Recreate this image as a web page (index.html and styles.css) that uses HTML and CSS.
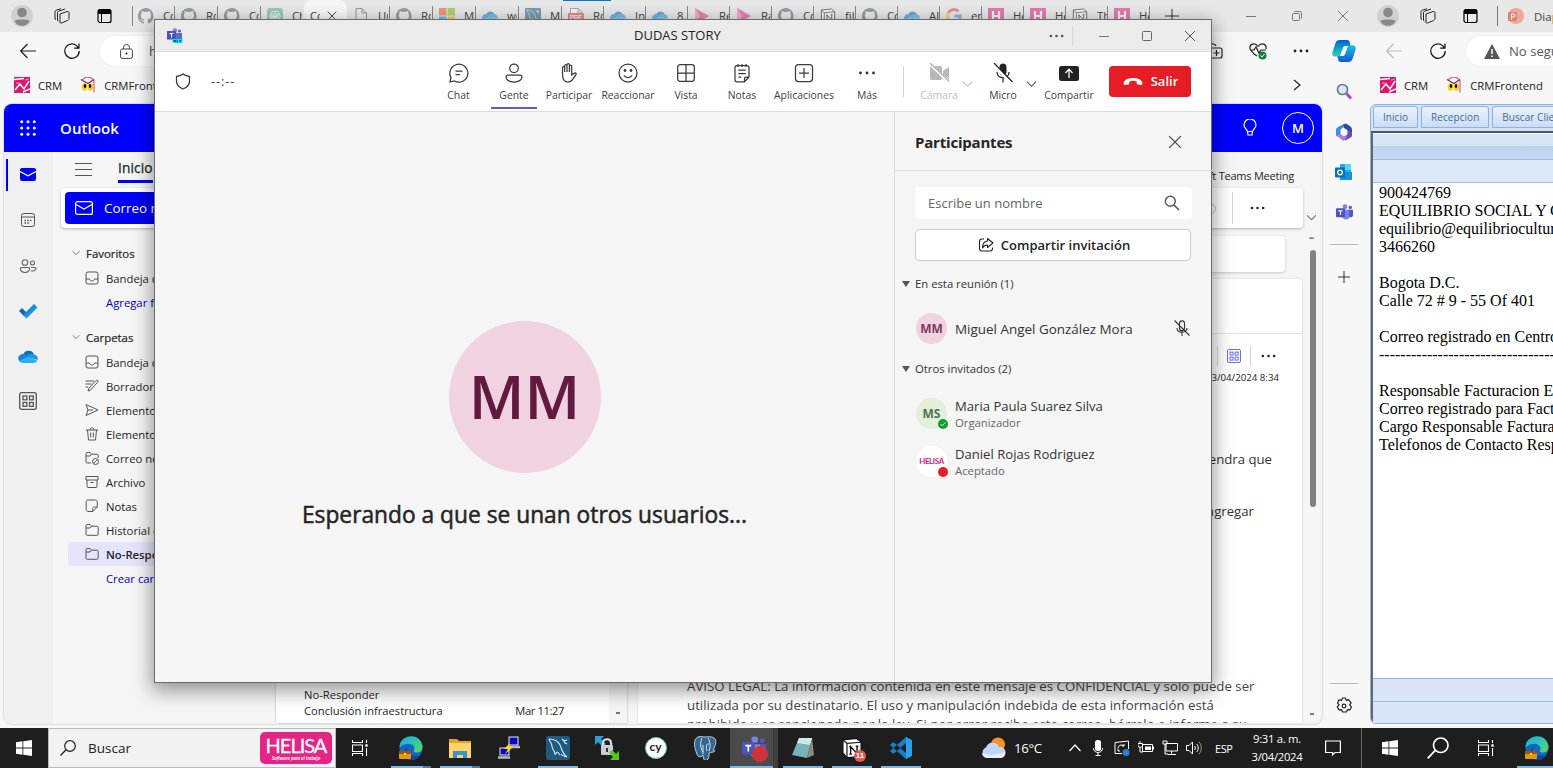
FILE: index.html
```html
<!DOCTYPE html>
<html lang="es">
<head>
<meta charset="utf-8">
<title>DUDAS STORY</title>
<link rel="stylesheet" href="styles.css">
</head>
<body>
<svg class="defs" aria-hidden="true">
<defs>
<linearGradient id="gBlue" x1="0" y1="0" x2="1" y2="1"><stop offset="0" stop-color="#1263c4"/><stop offset="1" stop-color="#25b7f5"/></linearGradient>
<linearGradient id="gEdge" x1="0" y1="0" x2="1" y2="1"><stop offset="0" stop-color="#1ca9e8"/><stop offset=".55" stop-color="#36c8a6"/><stop offset="1" stop-color="#62d84e"/></linearGradient>
<linearGradient id="gCop" x1="0" y1="0" x2="0" y2="1"><stop offset="0" stop-color="#0a5fc4"/><stop offset=".6" stop-color="#13a9cf"/><stop offset="1" stop-color="#35cfb0"/></linearGradient>
<linearGradient id="gCop2" x1="0" y1="0" x2="0" y2="1"><stop offset="0" stop-color="#17c3dd"/><stop offset="1" stop-color="#1556d8"/></linearGradient>
<symbol id="github" viewBox="0 0 16 16"><path fill="#555b62" d="M8 0C3.58 0 0 3.58 0 8c0 3.54 2.29 6.53 5.47 7.59.4.07.55-.17.55-.38v-1.49C4 14.1 3.48 13 3.3 12.500 3.1 12 2.800 11.600 2.400 11.400c-.3-.15-.7-.5 0-.5.7 0 1.100.6 1.250.85.72 1.200 1.870.87 2.330.66.07-.52.280-.870.51-1.070-1.780-.2-3.640-.89-3.640-3.950 0-.87.310-1.590.820-2.150-.080-.2-.360-1.020.080-2.120 0 0 .670-.210 2.200.820a7.600 7.600 0 0 1 4 0c1.530-1.040 2.200-.820 2.200-.820.440 1.100.160 1.920.080 2.120.510.560.820 1.270.820 2.150 0 3.070-1.870 3.750-3.650 3.950.290.250.540.730.540 1.480v2.200c0 .210.150.460.550.380A8 8 0 0 0 8 0z"/></symbol>
<symbol id="cloud" viewBox="0 0 20 13"><path fill="#1068bd" d="M5.200 4.500A5.800 5.800 0 0 1 15.800 4L10 9z"/><path fill="#0f84dc" d="M5.500 4a4.600 4.600 0 0 0-4.500 7l10-2-2.500-4.200A5 5 0 0 0 5.500 4z"/><path fill="#1798e8" d="M15.200 4.200A4.500 4.500 0 0 1 19.500 10L8.500 6.500a6 6 0 0 1 6.700-2.300z"/><path fill="#28b0f2" d="m1 11 8.500-4.300L19.300 10.500A4 4 0 0 1 16 13H5c-1.700 0-3.200-.700-4-2z"/></symbol>
<symbol id="openai" viewBox="0 0 16 16"><rect width="16" height="16" rx="3" fill="#57ab95"/><g fill="none" stroke="#fff"><circle cx="8" cy="8" r="2.300"/><path d="M8 3.500a3 3 0 0 1 4 2.500L8 8.500M12 6a3 3 0 0 1 0 4.500L8 8M12 10.500a3 3 0 0 1-5 1.500V7.500M8 3.500a3 3 0 0 0-4 2.500v4.500l4-2.500M4 10.500a3 3 0 0 1-.500-4"/></g></symbol>
<symbol id="page" viewBox="0 0 16 16"><path d="M3 .500h6l4.500 4.500v10.500H3zM9 .500V5h4.500" fill="none" stroke="#555"/></symbol>
<symbol id="ms" viewBox="0 0 16 16"><path fill="#f35325" d="M0 0h7.500v7.500H0z"/><path fill="#81bc06" d="M8.500 0H16v7.500H8.500z"/><path fill="#05a6f0" d="M0 8.500h7.500V16H0z"/><path fill="#ffba08" d="M8.500 8.500H16V16H8.500z"/></symbol>
<symbol id="mysql" viewBox="0 0 24 24"><rect width="24" height="24" rx="2" fill="#1f5a80"/><path d="M3 3c5 0 9 2 11 6 1.500 3 2 8 7 12-3-1-5-1-6-3M3 3c0 2 2 3 2.500 5S6 13 8 15c1 1 0 2 1 3s1-2 2-2 2 2 3 3" fill="none" stroke="#dbe8ef" stroke-width="1.100"/><path d="m16 3 2 2 1 2 2 1M18 5l3-1" fill="none" stroke="#dbe8ef" stroke-width="1.300"/></symbol>
<symbol id="pdf" viewBox="0 0 16 16"><path d="M2.500.500h8l3.500 4V15H2.500zM10 .500V5h4" fill="#fff" stroke="#777"/><rect y="5" width="16" height="8" rx="1" fill="#e33"/><text x="8" y="11.300" font-family="Liberation Sans, sans-serif" font-weight="700" font-size="6" text-anchor="middle" fill="#fff">PDF</text></symbol>
<symbol id="play" viewBox="0 0 16 16"><path fill="#e0307f" d="M1 0 15 8 1 16z"/><path fill="#f17fb0" d="m1 0 5 8-5 8z"/></symbol>
<symbol id="notion" viewBox="0 0 24 24"><path fill="#fff" stroke="#111" stroke-width="1.500" d="m2 3 15-1.500 5 4v16L6.500 22.500 2 17.500z"/><path d="m2 3 4.500 4L22 5.700M6.500 7v15" fill="none" stroke="#111" stroke-width="1.300"/><path d="M10.500 18.500v-8l7 7.500v-8M9 10.500h2M16 10h3M9 18.700h3" fill="none" stroke="#111" stroke-width="1.500"/></symbol>
<symbol id="google" viewBox="0 0 16 16"><g fill="none" stroke-width="2.800"><path stroke="#ea4335" d="M2.500 4.800A6.300 6.300 0 0 1 12.500 3.500"/><path stroke="#fbbc05" d="M2.500 4.800a6.300 6.300 0 0 0 0 6.400"/><path stroke="#34a853" d="M2.500 11.200a6.300 6.300 0 0 0 9.800 1.500"/><path stroke="#4285f4" d="M12.300 12.700A6 6 0 0 0 14.300 8H8.500"/></g></symbol>
<symbol id="hpink" viewBox="0 0 16 16"><rect width="16" height="16" fill="#e61f80"/><path d="M5 3v10M11 3v10M5 8h6" stroke="#fff" stroke-width="2.200" fill="none"/></symbol>
<symbol id="stack" viewBox="0 0 17 17"><g fill="none" stroke="#222" stroke-linejoin="round"><path d="m7 6 7-2.500c1-.300 2 .300 2 1.300v5.700c0 1-.500 1.500-1.500 2L8.500 15C7.500 15.300 7 15 7 14z"/><path d="M4.500 12.500V5c0-1 .300-1.500 1.200-1.800L12 1M2 11V4c0-1 .300-1.500 1.200-1.800L8 .800M4.500 12.500l1 .500M2 11l1 .500"/></g></symbol>
<symbol id="vtabs" viewBox="0 0 16 16"><rect x="1" y="1.500" width="13" height="13" rx="2" fill="none" stroke="#000" stroke-width="1.200"/><path d="M1.500 2h12v3.500h-12zM4.500 6v8" stroke="#000" fill="#000"/></symbol>
<symbol id="back" viewBox="0 0 16 16"><path d="M16 8H1M7.500 1 .700 8l6.800 7" fill="none" stroke="currentColor" stroke-width="1.200"/></symbol>
<symbol id="reload" viewBox="0 0 16 16"><path d="M14.500 5A7.200 7.200 0 1 0 15.200 8M15 .500V5.200h-4.800" fill="none" stroke="#111" stroke-width="1.200"/></symbol>
<symbol id="x" viewBox="0 0 12 12"><path d="m1 1 10 10M11 1 1 11" stroke="currentColor" fill="none"/></symbol>
<symbol id="crm" viewBox="0 0 16 16"><rect width="16" height="16" fill="#e4126e"/><path d="m1 13 5-6 4 5 5-8M0 2.500l10-1M9 15l7-3" stroke="#fff" stroke-width="1.500" fill="none"/><path d="M2 6h3M11 3l4-1" stroke="#fff" stroke-width=".600"/></symbol>
<symbol id="owl" viewBox="0 0 16 16"><path d="M2 3.500c3-4.500 9-4.500 12 0v12" fill="none" stroke="#e95595" stroke-width="1.200"/><path d="m1 2.500 7 4 6-4" stroke="#6b3550" stroke-width="1.200" fill="none"/><ellipse cx="4.500" cy="10" rx="2.800" ry="3.800" fill="#f8d012"/><ellipse cx="10.500" cy="10" rx="2.800" ry="3.800" fill="#f8d012"/><ellipse cx="5" cy="9" rx="1.200" ry="2"/><ellipse cx="10" cy="9" rx="1.200" ry="2"/></symbol>
<symbol id="person" viewBox="0 0 22 22"><circle cx="11" cy="11" r="11" fill="#d2d0ce"/><circle cx="11" cy="7.500" r="4.800" fill="#8a8886"/><path fill="#8a8886" d="M3.500 15.500c2-1.500 13-1.500 15 0-1.500 7-13.500 7-15 0z"/></symbol>
<symbol id="dots" viewBox="0 0 16 4"><g fill="currentColor"><circle cx="2" cy="2" r="1.400"/><circle cx="8" cy="2" r="1.400"/><circle cx="14" cy="2" r="1.400"/></g></symbol>
<symbol id="chev" viewBox="0 0 12 8"><path d="m1 1.500 5 5 5-5" fill="none" stroke="currentColor" stroke-width="1.200"/></symbol>
<symbol id="mail" viewBox="0 0 18 14"><rect x=".600" y=".600" width="16.800" height="12.800" rx="2" fill="none" stroke="currentColor" stroke-width="1.200"/><path d="m1 3.500 8 4.500 8-4.500" fill="none" stroke="currentColor" stroke-width="1.200"/></symbol>
<symbol id="apps4" viewBox="0 0 18 18"><g fill="none" stroke="currentColor" stroke-width="1.300"><rect x=".700" y=".700" width="16.600" height="16.600" rx="2"/><rect x="4" y="4" width="3.800" height="3.800"/><rect x="10.500" y="4" width="3.800" height="3.800"/><rect x="4" y="10.500" width="3.800" height="3.800"/><rect x="10.500" y="10.500" width="3.800" height="3.800"/></g></symbol>
<symbol id="inbox" viewBox="0 0 14 14"><path d="M3 1h8a2 2 0 0 1 2 2v8a2 2 0 0 1-2 2H3a2 2 0 0 1-2-2V3a2 2 0 0 1 2-2zM1 8h3.500c.500 2.700 4.500 2.700 5 0H13" fill="none" stroke="currentColor"/></symbol>
<symbol id="draft" viewBox="0 0 14 14"><path d="m3 12 1-3 7-7.500c1.300-1 2.800.500 1.700 1.700L5.500 11zM.500 2H9M.500 5h6M.500 8H3" fill="none" stroke="currentColor"/></symbol>
<symbol id="send" viewBox="0 0 14 14"><path d="m1 1.500 12 5.500-12 5.500 2-5.500zM3 7h5" fill="none" stroke="currentColor"/></symbol>
<symbol id="trash" viewBox="0 0 14 14"><path d="M1 3h12M5 3c0-3 4-3 4 0M2.500 3l1 10h7l1-10M5.700 5.500v5M8.300 5.500v5" fill="none" stroke="currentColor"/></symbol>
<symbol id="folder" viewBox="0 0 14 14"><path d="M1 2.500c0-.700.500-1 1-1h3l1.500 1.700H12c.700 0 1.200.500 1.200 1.100V11c0 .800-.500 1.300-1.300 1.300H2.200C1.500 12.300 1 12 1 11zM1 5h4l1.500-1.800" fill="none" stroke="currentColor"/></symbol>
<symbol id="junk" viewBox="0 0 14 14"><path d="M6 12H2.200C1.500 12 1 11.500 1 11V2.500c0-.700.500-1 1-1h3l1.500 1.700H12c.700 0 1.200.500 1.200 1.100V7M1 5h4l1.500-1.800" fill="none" stroke="currentColor"/><circle cx="10.500" cy="10.500" r="3" fill="none" stroke="currentColor"/><path d="m8.500 12.500 4-4" stroke="currentColor"/></symbol>
<symbol id="archive" viewBox="0 0 14 14"><path d="M1 1.500h12V5H1zM2 5v6.500c0 .600.500 1 1 1h8c.600 0 1-.400 1-1V5M5.500 7.500h3" fill="none" stroke="currentColor"/></symbol>
<symbol id="note" viewBox="0 0 14 14"><path d="M3 1h7.500c1 0 1.800.800 1.800 1.800V8l-4.500 4.500H3c-1 0-1.800-.800-1.800-1.800V2.800C1.200 1.800 2 1 3 1zM12.300 8H9.500C8.500 8 7.800 8.500 7.800 9.500v3" fill="none" stroke="currentColor"/></symbol>
<symbol id="teams" viewBox="0 0 16 16"><circle cx="8.500" cy="2.500" r="2.200" fill="#7b83eb"/><circle cx="13.500" cy="3.200" r="1.600" fill="#5059c9"/><path fill="#7b83eb" d="M6 5.500h7V12a4 4 0 0 1-7 1z"/><path fill="#5059c9" d="M12 5.500h4V10c0 2-1.500 3-3.500 2.500z"/><rect y="4" width="8.500" height="8.500" rx="1" fill="#4b53bc"/><path d="M2.200 6.400h4M4.200 6.400v4" stroke="#fff" stroke-width="1.100"/></symbol>
<symbol id="edge" viewBox="0 0 24 24"><circle cx="12" cy="12" r="11.500" fill="#1166c6"/><path fill="url(#gEdge)" d="M.600 10C2-2 21-4 23.500 10c.500 7-7 8-9 5 3-3-1-8-6-7-4 0-7 2-7.900 4z"/><path fill="#1a3f96" d="M9 11c-3 3 0 9 7 9 3 0 5-1 6-2-3 6-10 8-14 5C4 20 5 13 9 11z"/><rect y="15" width="12" height="8" rx="1" fill="#e5950f"/><path fill="#9a5b00" d="M0 15h12v3H0z"/><path fill="#ffd45c" d="M5 17h2v2H5z"/></symbol>
<symbol id="win" viewBox="0 0 16 16"><path fill="#fff" d="m0 2.300 6.500-1v6.300H0zM7.300 1.200 16 0v7.600H7.300zM0 8.400h6.500v6.300l-6.500-1zM7.300 8.400H16V16l-8.700-1.200z"/></symbol>
<symbol id="taskview" viewBox="0 0 16 16"><path d="M.500 0v2.500h10V0M.500 5h10v6.500H.500zM.500 16v-2.500h10V16M14.500 0v3M14.500 8v8" fill="none" stroke="#fff" stroke-width="1.100"/><path fill="#fff" d="M13.300 4.300h2.400v2.400h-2.400z"/></symbol>
<symbol id="mag" viewBox="0 0 16 16"><circle cx="10" cy="6" r="5.300" fill="none" stroke="currentColor" stroke-width="1.200"/><path d="M6 9.800.500 15.500" stroke="currentColor" stroke-width="1.300"/></symbol>
</defs>
</svg>

<div class="desktop">
  <div class="screens">
    <div class="browser left-browser">
      <div class="tabstrip">
        <svg class="avatar"><use href="#person"/></svg>
        <svg class="stack"><use href="#stack"/></svg>
        <svg class="i16 vt"><use href="#vtabs"/></svg>
        <div class="tabs">
          <div class="tab"><svg><use href="#github"/></svg><span>Co</span></div>
          <div class="tab"><svg><use href="#github"/></svg><span>Ro</span></div>
          <div class="tab"><svg><use href="#github"/></svg><span>Co</span></div>
          <div class="tab plain"><svg><use href="#openai"/></svg><span>Ch</span></div>
          <div class="tab active"><span>Co</span><svg class="tx"><use href="#x"/></svg></div>
          <div class="tab"><svg><use href="#page"/></svg><span>Un</span></div>
          <div class="tab"><svg><use href="#github"/></svg><span>Ro</span></div>
          <div class="tab"><svg><use href="#ms"/></svg><span>Mi</span></div>
          <div class="tab"><svg><use href="#cloud"/></svg><span>wo</span></div>
          <div class="tab"><svg><use href="#mysql"/></svg><span>My</span></div>
          <div class="tab sm"><svg><use href="#pdf"/></svg><span>Ro</span></div>
          <div class="tab sm"><svg><use href="#cloud"/></svg><span>Ini</span></div>
          <div class="tab sm"><svg><use href="#cloud"/></svg><span>8.1</span></div>
          <div class="tab sm"><svg><use href="#play"/></svg><span>Re</span></div>
          <div class="tab sm"><svg><use href="#play"/></svg><span>Ra</span></div>
          <div class="tab sm"><svg><use href="#github"/></svg><span>Co</span></div>
          <div class="tab sm"><svg><use href="#notion"/></svg><span>fil</span></div>
          <div class="tab sm"><svg><use href="#github"/></svg><span>Co</span></div>
          <div class="tab sm"><svg><use href="#cloud"/></svg><span>Al</span></div>
          <div class="tab sm"><svg><use href="#google"/></svg><span>en</span></div>
          <div class="tab sm"><svg><use href="#hpink"/></svg><span>He</span></div>
          <div class="tab sm"><svg><use href="#hpink"/></svg><span>He</span></div>
          <div class="tab sm"><svg><use href="#notion"/></svg><span>Th</span></div>
          <div class="tab sm"><svg><use href="#hpink"/></svg><span>He</span></div>
        </div>
        <svg class="plus" viewBox="0 0 14 14"><path d="M7 0v14M0 7h14" stroke="#333"/></svg>
        <div class="winbtns">
          <svg viewBox="0 0 12 12"><path d="M1 6.500h10" stroke="#777"/></svg>
          <svg viewBox="0 0 12 12"><g fill="none" stroke="#777"><rect x="1.500" y="3.500" width="7" height="7" rx="1"/><path d="M3.500 1.500h6a1 1 0 0 1 1 1v6"/></g></svg>
          <svg viewBox="0 0 12 12"><use href="#x"/></svg>
        </div>
        <div class="loadbar"></div>
      </div>

      <div class="browser-body">
        <div class="main-col">
          <div class="address">
            <svg class="i16"><use href="#back"/></svg>
            <svg class="i16"><use href="#reload"/></svg>
            <div class="url"><svg width="13" height="15" viewBox="0 0 13 15"><rect x=".600" y="5" width="11.800" height="9.400" rx="1.500" fill="none" stroke="#444"/><path d="M3.500 5V3.500a3 3 0 0 1 6 0V5" fill="none" stroke="#444"/><circle cx="6.500" cy="9.500" r="1"/></svg><span>https://outlook.office.com</span></div>
            <div class="addr-right">
              <svg width="14" height="16" viewBox="0 0 14 16"><path d="M1 5h10a2 2 0 0 1 2 2v6a2 2 0 0 1-2 2H1M1 2c2-2 5-1 6 1M7.500 7v6M4.500 10h6" fill="none" stroke="#222" stroke-width="1.200"/></svg>
              <svg width="18" height="17" viewBox="0 0 18 17"><path d="M9 3.500C6-1 0 1 1 6l4 5 3 2M9 3.500c3-4.500 9-2.500 8 2.500M1 7h4l2-3 3 6 2-3h5" fill="none" stroke="#222" stroke-width="1.200"/><circle cx="13.500" cy="12.500" r="4" fill="#13803c"/><path d="m11.500 12.500 1.500 1.500 2.500-3" stroke="#fff" fill="none"/></svg>
              <svg width="16" height="4"><use href="#dots"/></svg>
            </div>
          </div>
          <div class="bookmarks">
            <svg class="i16"><use href="#crm"/></svg><span>CRM</span>
            <svg class="i16 owl"><use href="#owl"/></svg><span>CRMFrontend</span>
            <svg class="more" viewBox="0 0 8 12"><path d="m1 1 6 5-6 5" stroke="#222" stroke-width="1.200" fill="none"/></svg>
          </div>

          <div class="outlook">
            <div class="ol-head">
              <svg width="16" height="16" viewBox="0 0 16 16"><g fill="#fff"><circle cx="1.700" cy="1.700" r="1.500"/><circle cx="8" cy="1.700" r="1.500"/><circle cx="14.300" cy="1.700" r="1.500"/><circle cx="1.700" cy="8" r="1.500"/><circle cx="8" cy="8" r="1.500"/><circle cx="14.300" cy="8" r="1.500"/><circle cx="1.700" cy="14.300" r="1.500"/><circle cx="8" cy="14.300" r="1.500"/><circle cx="14.300" cy="14.300" r="1.500"/></g></svg>
              <b>Outlook</b>
              <svg class="bulb" viewBox="0 0 14 18"><path d="M4.500 12.500C4 10 1 9.500 1 6a6 6 0 0 1 12 0c0 3.500-3 4-3.500 6.500zM4.500 12.500 5 16h4l.500-3.500" fill="none" stroke="#fff" stroke-width="1.200"/></svg>
              <span class="me">M</span>
            </div>
            <div class="ol-body">
              <div class="rail">
                <div class="rail-item on"><svg width="16" height="13" viewBox="0 0 16 13"><rect width="16" height="13" rx="2" fill="#0000f5"/><path d="m0 3.500 8 4.200 8-4.200" stroke="#fff" stroke-width="1.200" fill="none"/></svg></div>
                <div class="rail-item"><svg width="14" height="14" viewBox="0 0 14 14"><rect x=".500" y=".500" width="13" height="13" rx="2" fill="none" stroke="#555"/><path d="M.500 4h13" stroke="#555"/><path d="M3.500 7.500h8M3.500 10h5" stroke="#555" stroke-width="1.500" stroke-dasharray="1.500 1.200"/></svg></div>
                <div class="rail-item"><svg width="18" height="14" viewBox="0 0 18 14"><g fill="none" stroke="#666" stroke-width="1.100"><circle cx="6" cy="3.500" r="2.800"/><circle cx="13.500" cy="4" r="2"/><path d="M2.500 8.500h7c2 0 1.500 5-3.500 5s-5.500-5-3.500-5zM12 8.500h4c2 0 1 4-4 3.500"/></g></svg></div>
                <div class="rail-item"><svg width="20" height="16" viewBox="0 0 20 16"><path d="m1 8 3-3 5 5-3 3z" fill="#1760bd"/><path d="m5 12 11-11 3.500 3.500L8.500 15.500z" fill="url(#gBlue)"/></svg></div>
                <div class="rail-item"><svg width="20" height="13"><use href="#cloud"/></svg></div>
                <div class="rail-item gray"><svg width="18" height="18"><use href="#apps4"/></svg></div>
              </div>
              <div class="ol-main">
                <div class="ol-tabs">
                  <svg width="17" height="13" viewBox="0 0 17 13"><path d="M0 .500h17M0 6.500h17M0 12.500h17" stroke="#555"/></svg>
                  <span class="inicio">Inicio</span>
                  <span class="tm">Microsoft Teams Meeting</span>
                </div>
                <div class="ribbon-row">
                  <div class="ribbon">
                    <div class="newmail"><svg width="18" height="14"><use href="#mail"/></svg><span>Correo nuevo</span></div>
                    <div class="rb-end"><i class="ring"></i><i class="vline"></i><svg width="15" height="4"><use href="#dots"/></svg></div>
                  </div>
                  <svg class="rb-chev"><use href="#chev"/></svg>
                </div>
                <div class="panes">
                  <div class="folders">
                    <div class="fhead"><svg><use href="#chev"/></svg>Favoritos</div>
                    <div class="frow"><svg><use href="#inbox"/></svg>Bandeja de entrada</div>
                    <div class="frow link">Agregar favorito</div>
                    <div class="fhead second"><svg><use href="#chev"/></svg>Carpetas</div>
                    <div class="frow"><svg><use href="#inbox"/></svg>Bandeja de entrada</div>
                    <div class="frow"><svg><use href="#draft"/></svg>Borradores</div>
                    <div class="frow"><svg><use href="#send"/></svg>Elementos enviados</div>
                    <div class="frow"><svg><use href="#trash"/></svg>Elementos eliminados</div>
                    <div class="frow"><svg><use href="#junk"/></svg>Correo no deseado</div>
                    <div class="frow"><svg><use href="#archive"/></svg>Archivo</div>
                    <div class="frow"><svg><use href="#note"/></svg>Notas</div>
                    <div class="frow"><svg><use href="#folder"/></svg>Historial de conversaciones</div>
                    <div class="frow sel"><svg><use href="#folder"/></svg>No-Responder</div>
                    <div class="frow link">Crear carpeta nueva</div>
                  </div>
                  <div class="list">
                    <div class="msgs">
                      <div>No-Responder</div>
                      <div class="msg2"><span>Conclusión infraestructura</span><span>Mar 11:27</span></div>
                      <div class="cut"><span>Señal bid indicadores de red</span><span>Mar 11:20</span></div>
                    </div>
                    <div class="lscroll"><i></i></div>
                  </div>
                  <div class="reading">
                    <div class="subject"></div>
                    <div class="mail">
                      <div class="mail-head"></div>
                      <div class="mail-tools"><i class="vline"></i><svg class="ap"><use href="#apps4"/></svg><i class="vline"></i><svg width="15" height="4"><use href="#dots"/></svg></div>
                      <div class="date">Mié 03/04/2024 8:34</div>
                      <div class="t1">tendra que</div>
                      <div class="t2">agregar</div>
                      <div class="legal">AVISO LEGAL: La información contenida en este mensaje es CONFIDENCIAL y solo puede ser<br>utilizada por su destinatario. El uso y manipulación indebida de esta información está<br>prohibido y es sancionado por la ley. Si por error recibe este correo, bórrelo e informe a su</div>
                    </div>
                  </div>
                  <div class="gutter"><i class="up"></i><i class="thumb"></i><i class="down"></i></div>
                </div>
              </div>
            </div>
          </div>
        </div>

        <div class="sidebar">
          <svg width="24" height="24" viewBox="0 0 24 24"><path d="M8 1h7c2 0 2.600 1.300 3 3l.700 3H14c-2 0-3 1-3.500 3L8 17.500H3c-3 0-3-2.500-2.300-5L3.500 4C4.200 2 5.500 1 8 1z" fill="url(#gCop)"/><path d="M16 23H9c-2 0-2.600-1.300-3-3l-.700-3H10c2 0 3-1 3.500-3L16 6.500h5c3 0 3 2.500 2.300 5L20.500 20c-.700 2-2 3-4.500 3z" fill="url(#gCop2)"/><path d="M11.500 8.500c.700-1 1.500-1.500 2.800-1.500h1.200l-3 8.500c-.700 1-1.500 1.500-2.800 1.500H8.500z" fill="#f7f7f7"/></svg>
          <svg width="17" height="17" viewBox="0 0 17 17"><circle cx="6.500" cy="6.500" r="5" fill="#cdeefa" stroke="#777" stroke-width="1.700"/><path d="m10.500 10.500 4.500 5" stroke="#c239d4" stroke-width="2.800"/></svg>
          <svg width="18" height="18" viewBox="0 0 18 18"><path d="M9 1 3 4Q1 5 1 7v5q0 1 1 1.500l3.500-2V7.500Q5.500 6 7 5.200L11 3z" fill="#3a8fd6"/><path d="M8.500 1.200 11 .600l4.500 3Q17 5 17 6.500V10l-4.500-2.500Q11.500 6 9 5z" fill="#2c4c9f"/><path d="m12.500 7.500 4.500 2v3q0 1.300-1.500 2l-5 3-4-2.500 4.500-2.500q1.500-1 1.500-2z" fill="#6a49b5"/><path d="M1 12l4.500-1L9 13.500 11.500 12v3L9 17.500Q8 17.700 7 17z" fill="#b57bd8"/></svg>
          <svg width="18" height="17" viewBox="0 0 18 17"><rect x="5" y="0" width="11" height="12" rx="1" fill="#28a8ea"/><path d="M10 0h6v6h-6z" fill="#50d9ff"/><path d="m5 8 12 0v8H5z" fill="#1490df"/><rect y="3.500" width="10" height="10" rx="1" fill="#0f6cbd"/><circle cx="5" cy="8.500" r="2.300" fill="none" stroke="#fff" stroke-width="1.300"/></svg>
          <svg width="17" height="17"><use href="#teams"/></svg>
          <i class="hr"></i>
          <svg width="12" height="12" viewBox="0 0 12 12"><path d="M6 0v12M0 6h12" stroke="#333"/></svg>
          <i class="hr low"></i>
          <svg class="gear" width="18" height="18" viewBox="0 0 18 18"><path d="m7.500 1 3 0 .700 2.300 2.300-.600 2.600 3.200-1.400 2 1.700 2-1.500 3-2.500-.200-.900 2.300h-4l-1-2.300-2.500.200-1.700-3 1.700-2-1.500-2L4 2.800l2.600.500z" fill="none" stroke="#222" stroke-width="1.200" stroke-linejoin="round"/><circle cx="9" cy="9" r="1.800" fill="none" stroke="#222" stroke-width="1.200"/></svg>
        </div>
      </div>
    </div>

    <div class="browser right-browser">
      <div class="tabstrip">
        <svg class="avatar"><use href="#person"/></svg>
        <svg class="stack"><use href="#stack"/></svg>
        <svg class="i16 vt"><use href="#vtabs"/></svg>
        <div class="rtab"><svg width="16" height="16" viewBox="0 0 16 16"><circle cx="8" cy="8" r="8" fill="#eda79a"/><rect x="0" y="4" width="9" height="9" rx="1" fill="#d98574"/><path d="M3.500 11.500V6h2a1.300 1.300 0 0 1 0 3h-2" fill="none" stroke="#fff"/></svg><span>Diapositivas</span></div>
      </div>
      <div class="address">
        <svg class="i16 dim"><use href="#back"/></svg>
        <svg class="i16"><use href="#reload"/></svg>
        <div class="url"><svg width="16" height="15" viewBox="0 0 16 15"><path d="M8 0 16 15H0z" fill="#555"/><path d="M8 5v5M8 11.500v1.500" stroke="#fff" stroke-width="1.500"/></svg><span class="noseg">No seguro</span></div>
      </div>
      <div class="bookmarks">
        <svg class="i16"><use href="#crm"/></svg><span>CRM</span>
        <svg class="i16 owl"><use href="#owl"/></svg><span>CRMFrontend</span>
      </div>
      <div class="crm">
        <div class="crm-tabs"><span>Inicio</span><span>Recepcion</span><span>Buscar Cliente</span></div>
        <div class="crm-panel">
          <div class="band b1"></div><div class="band b2"></div><div class="band b3"></div>
          <pre class="crm-text">900424769
EQUILIBRIO SOCIAL Y CULTURAL
equilibrio@equilibriocultural.com
3466260

Bogota D.C.
Calle 72 # 9 - 55 Of 401

Correo registrado en Centro de
-------------------------------------------

Responsable Facturacion Electronica
Correo registrado para Facturacion
Cargo Responsable Facturacion
Telefonos de Contacto Responsable</pre>
          <div class="band b4"></div><div class="band b5"></div>
        </div>
      </div>
    </div>
  </div>

  <div class="taskbar">
    <div class="start"><svg class="i16"><use href="#win"/></svg></div>
    <div class="search"><svg class="i16"><use href="#mag"/></svg><span>Buscar</span><div class="helisa"><b>HELISA</b><em>Software para el trabajo</em></div></div>
    <div class="slot tv"><svg class="i16"><use href="#taskview"/></svg></div>
    <div class="slot run two"><svg class="i24"><use href="#edge"/></svg></div>
    <div class="slot run two"><svg class="i24" viewBox="0 0 24 24"><path d="M1 3h8l2 2h12v16H1z" fill="#e7a51e"/><path d="M1 7h22v15H1z" fill="#fdd36a"/><path d="M5 22v-7h14v7h-4v-3H9v3z" fill="#3793d8"/></svg></div>
    <div class="slot"><svg class="i24" viewBox="0 0 24 24"><g stroke="#bbb"><rect x="12" y="1" width="9" height="8" fill="#0707c8" stroke="#eee"/><rect x="3" y="12" width="9" height="7" fill="#0707c8" stroke="#eee"/><path d="M12 11h11M1 21.500h12" stroke-width="2.400"/></g><path d="m13 7-6 6 4 0-3 5 8-7h-4z" fill="#ffe600"/></svg></div>
    <div class="slot run"><svg class="i24"><use href="#mysql"/></svg></div>
    <div class="slot"><svg class="i24" viewBox="0 0 24 24"><path d="M0 0h9L6 3l5 5-3 3-5-5-3 3z" fill="#2ba0d8"/><path d="M8 10V7c0-5 8-5 8 0v3" fill="none" stroke="#ddd" stroke-width="2.200"/><rect x="6" y="9" width="12" height="10" rx="1" fill="#c9ccd1"/><path d="M12 12v4" stroke="#333" stroke-width="2"/><path d="M24 24h-9l3-3-4-4 3-3 4 4 3-3z" fill="#56c71e"/></svg></div>
    <div class="slot"><div class="cy">cy</div></div>
    <div class="slot"><svg class="i24" viewBox="0 0 24 24"><path d="M5 1c3-1 5 0 7 0s6-1 9 1 2 7-1 12c2 0 3 1 0 2-3 1-3 0-4 1 0 4 0 6-2 7s-4 0-4-5c-3 3-5 2-6-1C2 13-1 4 5 1z" fill="#336791" stroke="#bfd0dc"/><path d="M9 2c-2 4-2 10 1 14M15 2c2 4 3 7 1 13M10 9v9M16 8c-3-1-3 4-2 7" fill="none" stroke="#dbe5ec"/></svg></div>
    <div class="slot run teams-slot"><svg class="i24"><use href="#teams"/></svg><i class="rec"></i></div>
    <div class="slot run"><svg class="i24" viewBox="0 0 24 24"><path d="M8 2h13l-5 20-15-3z" fill="#78b3ba"/><path d="M8 2h13l-2 7L6 7z" fill="#c5e9ec"/><path d="m21 2 2 17-7 3z" fill="#8c8c7a"/><path d="M8 3h13" stroke="#e5e5e5" stroke-width="2" stroke-dasharray="1 1"/></svg></div>
    <div class="slot run"><svg class="i22"><use href="#notion"/></svg><i class="badge">11</i></div>
    <div class="slot run"><svg class="i24" viewBox="0 0 24 24"><path d="m17 1 6 3v16l-6 3z" fill="#27a2ed"/><path d="M17 1 1 15l2 2 2 .500L17 7zM17 23 1 9l2-2 2-.500L17 17z" fill="#1480cf"/></svg></div>
    <div class="tray">
      <svg width="25" height="22" viewBox="0 0 25 22"><circle cx="17" cy="7.500" r="7" fill="#f8951d"/><path d="M6 21a5.500 5.500 0 0 1-1-10.500A7 7 0 0 1 18 10a5.500 5.500 0 0 1 2 11z" fill="#bfd6fb"/><path d="M6 21a5 5 0 0 1-5-5c6 3 16 2 23-1a5 5 0 0 1-4 6z" fill="#e5eefe"/></svg>
      <span class="temp">16°C</span>
      <svg class="t-up" width="12" height="8" viewBox="0 0 12 8"><path d="m.500 7 5.500-6 5.500 6" fill="none" stroke="#fff" stroke-width="1.200"/></svg>
      <svg class="t-i" viewBox="0 0 16 16"><rect x="5" y="0" width="6" height="11" rx="2.500" fill="#fff"/><path d="M3.500 8c0 6 9 6 9 0M8 13v3M5.500 15.500h5" stroke="#fff" fill="none"/></svg>
      <svg class="t-i" viewBox="0 0 16 16"><path d="M1 2.500 14.500 1v8M1 2.500v11h7M4 8.500a3.500 3.500 0 0 1 6-2.500V4M10 6H8M4 9v2h2" fill="none" stroke="#fff"/><circle cx="12" cy="12.500" r="3.500" fill="#2f7fd0"/></svg>
      <svg class="t-i" viewBox="0 0 16 16"><path d="M4.500 4.500h10v7h-10zM2 1v3M0 3.500h4.500v3c-2 1-3 1-4.500 0zM2 7v5h3" fill="none" stroke="#fff"/><path d="M7 6.500h6v3.500H7zM15 6.500h1v3h-1z" fill="#fff"/></svg>
      <svg class="t-i" viewBox="0 0 16 16"><path d="M4 3.500h11.500v7.500H4zM9.500 11v3M6 14.500h8M1 1h4v3H1zM3 4v10h3" fill="none" stroke="#fff"/></svg>
      <svg class="t-i" viewBox="0 0 16 16"><path d="M.500 5.500h2.500l3.500-3.500v12L3 10.500H.500zM8.500 6c1 1 1 3 0 4M10.700 4c2 2 2 6 0 8" fill="none" stroke="#fff"/><path d="M13 2c3 3 3 9 0 12" stroke="#999" fill="none"/></svg>
      <span class="esp">ESP</span>
      <div class="clock"><span>9:31 a. m.</span><span>3/04/2024</span></div>
      <svg class="notif" viewBox="0 0 16 16"><path d="M.600 1h14.800v11.500H10L7.500 15v-2.500H.600z" fill="none" stroke="#fff" stroke-width="1.200"/></svg>
    </div>
    <div class="tb2">
      <svg class="i16"><use href="#win"/></svg>
      <svg class="mag2"><use href="#mag"/></svg>
      <svg class="i16"><use href="#taskview"/></svg>
      <div class="slot run last"><svg class="i24"><use href="#edge"/></svg></div>
    </div>
  </div>

  <section class="meeting">
    <header class="m-title">
      <svg class="m-logo" viewBox="0 0 17 16"><circle cx="9" cy="2.500" r="2.200" fill="#7b83eb"/><circle cx="13.500" cy="3" r="1.500" fill="#5059c9"/><path d="M9 5h7v7H9z" fill="#6068d0"/><rect x="1" y="3" width="9" height="8.500" fill="#4b53bc"/><path d="M3.500 5.500h4M5.500 5.500v4" stroke="#fff"/><rect x="6.500" y="11" width="10" height="4" fill="#00e5e5"/><path d="M8 14v-2l1.500 2v-2M11 12v2h1M13.500 12l.800 2 .700-2" stroke="#124" stroke-width=".600" fill="none"/></svg>
      <h1>DUDAS STORY</h1>
      <svg class="td"><use href="#dots"/></svg><i class="vline"></i>
      <svg class="tb" viewBox="0 0 12 12"><path d="M1 6.500h10" stroke="#777"/></svg>
      <svg class="tb" viewBox="0 0 12 12"><rect x="1.500" y="1.500" width="9" height="9" rx="1" fill="none" stroke="#666"/></svg>
      <svg class="tb"><use href="#x"/></svg>
    </header>
    <div class="m-tools">
      <div class="m-left"><svg width="16" height="17" viewBox="0 0 16 17"><path d="M8 1c2 1.700 4 2.300 6.500 2.300V8c0 4-2.500 6.500-6.500 8C4 14.500 1.500 12 1.500 8V3.300C4 3.300 6 2.700 8 1z" fill="none" stroke="#333" stroke-width="1.200"/></svg><span>--:--</span></div>
      <div class="tool w56"><svg viewBox="0 0 20 20"><path d="M1 19l1-4.500A9 9 0 1 1 5.500 18zM6.500 8.200h7M6.500 11.700h4.500" /></svg>Chat</div>
      <div class="tool w56 cur"><svg viewBox="0 0 20 20"><circle cx="10" cy="5.300" r="4.300"/><path d="M4 12h12c1.500 0 2 .800 2 2 0 3-3.500 5-8 5s-8-2-8-5c0-1.200.500-2 2-2z"/></svg>Gente</div>
      <div class="tool w54"><svg viewBox="0 0 20 20"><path d="M3.500 11V5c0-2 2.200-2 2.200 0v4-6c0-2 2.300-2 2.300 0v6-7c0-1.800 2.400-1.800 2.400 0v7-5.500c0-1.800 2.300-1.800 2.300 0V12l2.300-1.700c1.500-.700 2.700 0 2 1C14 16 13 19 8.700 19S3.500 15 3.500 11z"/></svg>Participar</div>
      <div class="tool w64"><svg viewBox="0 0 20 20"><circle cx="10" cy="10" r="9"/><path d="M6 12.500c1.500 2.800 6.500 2.800 8 0"/><circle cx="7" cy="7.500" r=".800" fill="#333"/><circle cx="13" cy="7.500" r=".800" fill="#333"/></svg>Reaccionar</div>
      <div class="tool w52"><svg viewBox="0 0 20 20"><rect x="1.700" y="1.700" width="16.600" height="16.600" rx="2.500"/><path d="M10 1.700v16.600M1.700 10h16.600"/></svg>Vista</div>
      <div class="tool w60"><svg viewBox="0 0 20 20"><path d="M5 2.500h10c1 0 2 .800 2 2V14l-4.500 4.800H5c-1.200 0-2-.800-2-2V4.500c0-1.200.800-2 2-2zM17 14h-3c-1 0-1.500.500-1.500 1.500v3.300M6.300 7h7.400M6.300 10.500h7.400M6.300 14h3M6 1v3M10 1v3M14 1v3"/></svg>Notas</div>
      <div class="tool w64"><svg viewBox="0 0 20 20"><rect x="1.500" y="1.500" width="17" height="17" rx="3"/><path d="M10 5v10M5 10h10"/></svg>Aplicaciones</div>
      <div class="tool w62"><svg viewBox="0 0 20 20"><g fill="#333" stroke="none"><circle cx="3.500" cy="10" r="1.400"/><circle cx="10" cy="10" r="1.400"/><circle cx="16.500" cy="10" r="1.400"/></g></svg>Más</div>
      <i class="vline tall"></i>
      <div class="tool w42 off"><svg viewBox="0 0 20 20"><path d="M3 3h8c1.500 0 2 .800 2 2v10c0 1.500-.500 2-2 2H3c-1.500 0-2-.500-2-2V5c0-1.200.500-2 2-2zM14 8l6-4v12l-6-4z" fill="#b8b8b8" stroke="none"/><path d="m0 0 20 19" stroke="#fff" stroke-width="3"/><path d="m1 0 20 19" stroke="#aaa"/></svg>Cámara</div>
      <svg class="tc off"><use href="#chev"/></svg>
      <div class="tool w40 dark"><svg viewBox="0 0 20 20"><path d="M6.500 4c0-4.600 7-4.600 7 0v5c0 4.600-7 4.600-7 0z" fill="#222" stroke="none"/><path d="M4 9c0 7.500 12 7.500 12 0M10 15v4.500"/><path d="M0 1 18 20" stroke="#fff" stroke-width="3"/><path d="M1 0 19.500 19"/></svg>Micro</div>
      <svg class="tc"><use href="#chev"/></svg>
      <div class="tool w52 dark sh"><svg viewBox="0 0 20 20"><rect y="3" width="20" height="15" rx="2.500" fill="#222" stroke="none"/><path d="M10 15V6.500M6.500 10 10 6.200l3.500 3.800" stroke="#fff"/></svg>Compartir</div>
      <button class="leave"><svg viewBox="0 0 20 9"><path d="M.800 5C3-.500 17-.500 19.200 5c.500 1.800 0 3.300-1.300 3l-3.200-.600c-1.500-.400-.700-2-1.200-3-2-1-5-1-7 0-.500 1 .300 2.600-1.200 3L2.100 8C.800 8.300.300 6.800.800 5z" fill="#fff"/></svg>Salir</button>
    </div>
    <div class="m-body">
      <div class="stage"><div class="big">MM</div><p>Esperando a que se unan otros usuarios...</p></div>
      <aside class="people">
        <div class="p-head"><h2>Participantes</h2><svg><use href="#x"/></svg></div>
        <div class="p-body">
          <div class="p-search"><span>Escribe un nombre</span><svg viewBox="0 0 16 16"><circle cx="6.300" cy="6.300" r="5" fill="none" stroke="#555" stroke-width="1.400"/><path d="m10 10 5 5" stroke="#555" stroke-width="1.600"/></svg></div>
          <div class="p-share"><svg viewBox="0 0 16 16"><path d="M6 2H4C2.500 2 1.500 3 1.500 4.500v7C1.500 13 2.500 14 4 14h8c1.500 0 2.500-1 2.500-2.500V10.500M9.500 1.500 15 6l-5.500 4.500V8C7 8 5.500 9 4.500 11 4.500 7 6 4.500 9.500 4z" fill="none" stroke="#222" stroke-width="1.100" stroke-linejoin="round"/></svg><span>Compartir invitación</span></div>
          <div class="p-sec"><i></i>En esta reunión (1)</div>
          <div class="p-row r1"><span class="pic pink">MM</span><div class="nm">Miguel Angel González Mora</div>
            <svg class="mute" viewBox="0 0 16 16"><path d="M5.500 3.500c0-3.500 5-3.500 5 0V8c0 3.500-5 3.500-5 0zM3 8c0 5.500 10 5.500 10 0M8 12v4M.500.500l15 15" fill="none" stroke="#333" stroke-width="1.100"/></svg></div>
          <div class="p-sec"><i></i>Otros invitados (2)</div>
          <div class="p-row r2"><span class="pic green">MS<svg class="st" viewBox="0 0 10 10"><circle cx="5" cy="5" r="5" fill="#0fa22b"/><path d="M2.800 5.200 4.300 6.700 7.200 3.700" stroke="#fff" fill="none"/></svg></span><div class="nm">Maria Paula Suarez Silva<small>Organizador</small></div></div>
          <div class="p-row r3"><span class="pic hel">HELISA<svg class="st" viewBox="0 0 10 10"><circle cx="5" cy="5" r="5" fill="#e81c24"/></svg></span><div class="nm">Daniel Rojas Rodriguez<small>Aceptado</small></div></div>
        </div>
      </aside>
    </div>
  </section>
</div>
</body>
</html>
```
FILE: styles.css
```css
* { box-sizing: border-box; }
body { margin: 0; font-family: "Open Sans", "Noto Sans", sans-serif; font-size: 13px; color: #242424; overflow: hidden; }
svg { flex: none; display: block; }
.defs { position: absolute; width: 0; height: 0; }
i { font-style: normal; display: block; flex: none; }
.i16 { width: 16px; height: 16px; }
.i22 { width: 22px; height: 22px; }
.i24 { width: 24px; height: 24px; }
.vline { width: 1px; background: #d5d5d5; }

.desktop { width: 1553px; height: 768px; position: relative; overflow: hidden; display: flex; flex-direction: column; background: #f7f7f7; }
.screens { height: 728px; display: flex; }
.browser { display: flex; flex-direction: column; overflow: hidden; flex: none; background: #f7f7f7; }
.left-browser { width: 1366px; }
.right-browser { width: 187px; }

/* tab strip */
.tabstrip { height: 32px; flex: none; background: #e8e8e8; display: flex; align-items: center; padding-left: 11px; position: relative; }
.avatar { width: 22px; height: 22px; }
.stack { width: 17px; height: 17px; margin-left: 20px; }
.vt { margin-left: 27px; }
.tabs { display: flex; height: 32px; margin-left: 18px; border-left: 1px solid transparent; }
.tab { width: 43px; height: 32px; display: flex; align-items: center; padding-left: 6px; gap: 9px; overflow: hidden; background: linear-gradient(#888, #888) 42px 6px / 1px 20px no-repeat; }
.tab:first-child { background: linear-gradient(#888, #888) 0 6px / 1px 20px no-repeat, linear-gradient(#888, #888) 42px 6px / 1px 20px no-repeat; }
.tab.sm { width: 42px; background-position: 41px 6px; }
.tab svg { width: 16px; height: 16px; opacity: .55; }
.tab span { width: 10px; overflow: hidden; white-space: nowrap; font-size: 11.300px; color: #444; line-height: 20px; }
.tab.plain { background: none; }
.tab.active { background: #f7f7f7; border-radius: 8px 8px 0 0; padding-left: 6px; gap: 7px; }
.tab.active .tx { width: 10px; height: 10px; opacity: 1; }
.plus { width: 14px; height: 14px; margin-left: 15px; }
.winbtns { margin-left: auto; display: flex; gap: 34px; padding-right: 17px; color: #777; }
.winbtns svg { width: 12px; height: 12px; }
.loadbar { position: absolute; left: 563px; top: 0; width: 48px; height: 1px; background: #0078d4; }

.browser-body { display: flex; height: 696px; }
.main-col { width: 1322px; display: flex; flex-direction: column; }
.address { height: 38px; flex: none; display: flex; align-items: center; padding-left: 20px; color: #222; }
.address .i16 + .i16 { margin-left: 28px; }
.address .dim { color: #bdbdbd; }
.url { height: 30px; width: 1080px; margin-left: 20px; background: #fff; border-radius: 15px; display: flex; align-items: center; padding-left: 20px; gap: 16px; color: #555; box-shadow: 0 0 3px #0001; font-size: 13.100px; flex: none; }
.right-browser .url { padding-left: 18px; gap: 9px; }
.addr-right { display: flex; align-items: center; margin-left: 29px; gap: 26px; }
.bookmarks { height: 34px; flex: none; display: flex; align-items: center; padding: 0 0 4px 14px; font-size: 11.300px; color: #222; }
.bookmarks span { margin-left: 8px; }
.bookmarks .owl { margin-left: 18px; }
.more { width: 8px; height: 12px; margin-left: auto; margin-right: 21px; }

/* outlook */
.outlook { margin-left: 4px; width: 1318px; height: 620px; border-radius: 8px; overflow: hidden; background: #f5f5f5; box-shadow: 0 0 2px #0005; display: flex; flex-direction: column; }
.ol-head { height: 48px; flex: none; background: #0000ff; color: #fff; display: flex; align-items: center; padding-left: 16px; }
.ol-head b { font-size: 15px; font-weight: 600; margin-left: 24px; letter-spacing: .1px; }
.bulb { width: 14px; height: 18px; margin-left: auto; }
.me { width: 32px; height: 32px; border: 1px solid #fff; border-radius: 50%; display: grid; place-items: center; font-size: 13px; font-weight: 600; margin: 0 8px 0 25px; }
.ol-body { display: flex; height: 572px; }
.rail { width: 49px; background: #f0f0f0; display: flex; flex-direction: column; padding-right: 1px; }
.rail-item { height: 45.500px; display: flex; align-items: center; justify-content: center; }
.rail-item.on { background: linear-gradient(#0000f5, #0000f5) 2px 7px / 2px 32px no-repeat; }
.gray { color: #555; }
.rail-item.gray { height: 42px; }
.ol-main { width: 1269px; display: flex; flex-direction: column; }
.ol-tabs { height: 36px; flex: none; display: flex; align-items: center; padding-left: 22px; }
.ol-tabs svg { margin-top: -2px; }
.inicio { margin-left: 26px; font-size: 13.700px; line-height: 24px; border-bottom: 3px solid #0000f5; -webkit-text-stroke: .25px #242424; margin-top: -1px; letter-spacing: .1px; }
.tm { margin: 10px 28px 0 auto; font-size: 11px; letter-spacing: -.23px; }
.ribbon-row { display: flex; height: 40px; flex: none; padding-left: 8px; }
.ribbon { width: 1242px; background: #fff; border-radius: 4px; box-shadow: 0 1px 3px #0004; display: flex; align-items: center; padding: 4px; }
.newmail { background: #0000f5; color: #fff; height: 32px; width: 150px; border-radius: 4px; display: flex; align-items: center; padding-left: 10px; gap: 11px; font-size: 13.400px; overflow: hidden; white-space: nowrap; }
.rb-end { margin-left: auto; display: flex; align-items: center; padding-right: 34px; }
.rb-end .vline { height: 32px; margin: 0 17px 0 16px; }
.ring { width: 11px; height: 11px; border: 1px solid #bbb; border-radius: 50%; }
.rb-chev { width: 11px; height: 7px; margin: 26px 0 0 3px; color: #777; }
.panes { display: flex; height: 496px; }
.folders { width: 223px; padding-top: 14px; font-size: 11.300px; }
.frow, .fhead { height: 24px; display: flex; align-items: center; white-space: nowrap; margin-left: 15px; padding-left: 17px; overflow: hidden; }
.fhead { padding: 0 0 2px 4px; -webkit-text-stroke: .2px #242424; gap: 6px; font-size: 11.400px; }
.fhead svg { width: 8px; height: 6px; color: #555; }
.fhead.second { margin-top: 12px; }
.frow svg { width: 14px; height: 14px; color: #555; margin-right: 7px; margin-top: -1px; }
.frow.link { padding-left: 38px; color: #0000cc; }
.sel { background: #e4e5fd; border-radius: 4px; font-weight: 600; }
.list { width: 351px; background: #fff; box-shadow: 0 0 2px #0004; display: flex; height: 495px; overflow: hidden; font-size: 11.200px; }
.msgs { flex: 1; padding: 459px 45px 0 28px; line-height: 16px; overflow: hidden; white-space: nowrap; }
.msg2, .cut { display: flex; justify-content: space-between; }
.msg2 span:last-child { letter-spacing: -.4px; }
.lscroll { width: 18px; background: #f5f5f5; display: flex; align-items: flex-end; justify-content: center; padding-bottom: 9px; }
.lscroll i, .gutter .down { width: 4px; height: 2px; background: #777; }
.reading { width: 664px; margin-left: 11px; }
.subject { margin-top: 8px; height: 36px; width: 647px; background: #fff; border-radius: 4px; box-shadow: 0 1px 3px #0003; }
.mail { margin-top: 7px; height: 444px; background: #fff; border-radius: 4px 4px 0 0; box-shadow: 0 0 2px #0003; overflow: hidden; display: flex; flex-direction: column; }
.mail > * { flex: none; }
.mail-head { height: 55px; border-bottom: 1px solid #e5e5e5; }
.mail-tools { display: flex; justify-content: flex-end; align-items: center; height: 44px; padding-right: 26px; }
.mail-tools .vline { height: 20px; }
.ap { width: 14px; height: 14px; margin: 0 9px 0 9px; color: #6a6af5; }
.mail-tools .vline + svg:last-child { margin-left: 10px; }
.date { text-align: right; padding-right: 23px; font-size: 9.700px; line-height: 14px; height: 73px; margin-top: -7px; }
.t1, .t2 { text-align: right; font-size: 13.200px; line-height: 20px; height: 51px; color: #333; }
.t1 { padding-right: 30px; margin-top: 5px; }
.t2 { padding-right: 48px; height: 176px; margin-top: 1px; }
.legal { padding-left: 49px; font-size: 13.220px; line-height: 19px; color: #444; white-space: nowrap; letter-spacing: .02px; }
.gutter { width: 19px; display: flex; flex-direction: column; align-items: center; padding-top: 9px; }
.up { width: 5px; height: 2px; background: #888; border-radius: 3px 3px 0 0; }
.thumb { width: 6px; height: 257px; margin-top: 11px; background: #818181; border-radius: 3px; margin-left: 2px; }
.down { margin-top: auto; margin-bottom: 9px; }

.sidebar { width: 44px; display: flex; flex-direction: column; align-items: center; padding-top: 7px; }
.sidebar svg:nth-child(2) { margin-top: 20px; }
.sidebar svg:nth-child(3) { margin-top: 23px; }
.sidebar svg:nth-child(4) { margin-top: 23px; }
.sidebar svg:nth-child(5) { margin-top: 23px; }
.hr { width: 28px; height: 1px; background: #bbb; margin: 23px 0 26px; }
.hr.low { margin: auto 0 13px; }
.gear { margin-bottom: 13px; }

/* crm window */
.rtab { height: 20px; display: flex; align-items: center; border-left: 1px solid #777; margin-left: 18px; padding-left: 10px; gap: 10px; font-size: 11.500px; color: #444; white-space: nowrap; }
.noseg { white-space: nowrap; }
.crm { margin-left: 4px; width: 200px; height: 620px; background: #d3e2f6; border: 1px solid #8db2e3; border-radius: 6px 0 0 6px; display: flex; flex-direction: column; overflow: hidden; }
.crm-tabs { height: 26px; flex: none; display: flex; gap: 3px; padding: 1px 0 4px 2px; color: #416aa3; font-size: 10px; }
.crm-tabs span { border: 1px solid #8db2e3; border-radius: 3px 3px 0 0; background: linear-gradient(#eaf2fc, #cbdcf3); padding: 0 9px; line-height: 21px; height: 22px; white-space: nowrap; letter-spacing: .05px; }
.crm-panel { flex: 1; border-left: 2px solid #666; border-top: 2px solid #555; background: #fff; display: flex; flex-direction: column; }
.band { flex: none; }
.b1 { height: 13px; background: #d7e5f6; border-top: 1px solid #fff; }
.b2 { height: 14px; background: linear-gradient(#b9d0ef, #cbdcf3); border-bottom: 1px solid #99bbe8; }
.b3 { height: 23px; background: #dce8f8; border-bottom: 1px solid #99bbe8; }
.crm-text { margin: 0; flex: 1; padding: 1px 0 0 6px; font: 16px/18px "Liberation Serif", serif; color: #000; }
.b4 { height: 23px; background: #dae6f7; border-top: 1px solid #8fb1e0; }
.b5 { height: 22px; background: #dae6f7; border-top: 1px solid #99bbe8; }

/* taskbar */
.taskbar { height: 40px; flex: none; background: #1e1e1e; display: flex; color: #fff; }
.start { width: 48px; display: grid; place-items: center; }
.search { width: 288px; background: #f2f2f2; border: 1px solid #bbb; display: flex; align-items: center; padding-left: 11px; color: #222; font-size: 13.500px; gap: 12px; }
.helisa { margin-left: auto; margin-right: 3px; width: 72px; height: 32px; background: #e62485; border-radius: 5px; color: #fff; display: flex; flex-direction: column; align-items: center; }
.helisa b { font: 400 20px/23px Lato, sans-serif; letter-spacing: -1px; margin-top: 2px; -webkit-text-stroke: .3px #fff; }
.helisa em { font: 700 4.800px/5px Lato, sans-serif; font-style: italic; margin-top: -1px; }
.slot { width: 49px; flex: none; display: grid; place-items: center; position: relative; }
.slot.tv { width: 50px; padding-right: 2px; }
.slot.run { background: linear-gradient(#76b9ed, #76b9ed) 5px 38px / 40px 2px no-repeat; }
.slot.two { background: linear-gradient(90deg, #76b9ed 32px, #4d7fa6 32px) 5px 38px / 40px 2px no-repeat; }
.cy { width: 22px; height: 22px; background: #fff; border-radius: 50%; border: 1px solid #67c7a4; color: #1b1e2e; font: 700 12px/17px Lato, sans-serif; text-align: center; }
.slot.teams-slot { background: linear-gradient(#76b9ed, #76b9ed) 0 38px / 43px 2px no-repeat, linear-gradient(90deg, #4b4b4b 43px, #333 43px, #3f3f3f 44px); margin: 0 0 0 1px; width: 48px; }
.rec { position: absolute; width: 16px; height: 16px; background: #d13438; border-radius: 50%; left: 22px; top: 18px; }
.badge { position: absolute; width: 12px; height: 12px; left: 27px; top: 22px; border-radius: 50%; background: #e2574c; font: 700 8px/12px "Liberation Sans", sans-serif; text-align: center; }
.tray { width: 436px; display: flex; align-items: center; padding-left: 56px; }
.temp { font-size: 13.300px; margin-left: 8px; width: 55px; letter-spacing: -.4px; }
.t-up { margin-right: 9px; }
.t-i { width: 16px; height: 16px; margin-right: 8px; }
.esp { font-size: 11px; width: 37px; margin-left: 5px; letter-spacing: -.4px; }
.clock { width: 52px; font-size: 11.300px; line-height: 18px; display: flex; flex-direction: column; align-items: center; white-space: nowrap; letter-spacing: -.3px; }
.clock span { margin-left: -2px; }
.notif { width: 16px; height: 16px; margin-left: 21px; }
.tb2 { flex: 1; border-left: 1px solid #666; display: flex; align-items: center; padding-left: 20px; overflow: hidden; }
.mag2 { width: 22px; height: 22px; margin: 0 29px 0 29px; }
.last { height: 40px; margin-left: 18px; }

/* meeting window */
.meeting { position: absolute; left: 154px; top: 19px; width: 1058px; height: 664px; border: 1px solid #6c6c6c; background: #f5f5f5; box-shadow: 0 6px 18px 2px #0006; display: flex; flex-direction: column; }
.m-title { height: 32px; flex: none; background: #ebebeb; border-bottom: 1px solid #ddd; display: flex; align-items: center; padding-left: 11px; }
.m-logo { width: 17px; height: 16px; }
.m-title h1 { margin: -2px 0 0 451px; font-size: 13px; font-weight: 400; color: #222; width: 415px; flex: none; letter-spacing: 0; white-space: nowrap; }
.td { width: 15px; height: 4px; color: #555; }
.m-title .vline { height: 20px; margin: 0 25px 0 8px; }
.tb { width: 12px; height: 12px; margin-right: 31px; color: #555; }
.m-tools { height: 60px; flex: none; background: #fff; border-bottom: 1px solid #ddd; display: flex; align-items: center; }
.m-left { width: 275px; padding: 0 0 1px 20px; display: flex; align-items: center; gap: 20px; color: #444; font-size: 13px; letter-spacing: .8px; }
.tool { height: 59px; padding-top: 10px; flex: none; display: flex; flex-direction: column; align-items: center; gap: 3px; font-size: 10.400px; line-height: 16px; white-space: nowrap; color: #424242; }
.tool svg { width: 22px; height: 22px; fill: none; stroke: #3b3b3b; stroke-width: 1.250; padding: 1px; }
.w40 { width: 40px; } .w42 { width: 42px; } .w52 { width: 52px; } .w54 { width: 54px; } .w56 { width: 56px; } .w60 { width: 60px; } .w62 { width: 62px; } .w64 { width: 64px; }
.m-left + .tool { padding-left: 1px; }
.cur { background: linear-gradient(#5b5fc7, #5b5fc7) 5px 55px / 46px 2px no-repeat; }
.tall { height: 31px; margin: 0 14px 0 5px; }
.off, .tool.off { color: #bdbdbd; }
.tool.dark svg { stroke: #222; }
.tc { width: 11px; height: 8px; color: #555; margin: 4px 9px 0 2px; }
.tc.off { color: #bdbdbd; margin-right: 10px; }
.dark + .tc { margin: 4px 4px 0 3px; }
.sh { margin-left: 2px; }
.leave { margin-left: 14px; width: 82px; height: 31px; border: 0; border-radius: 4px; background: #e81c24; color: #fff; font: 600 13px "Open Sans", sans-serif; display: flex; align-items: center; justify-content: center; gap: 8px; padding: 0 0 1px 1px; }
.leave svg { width: 20px; height: 9px; }
.m-body { flex: 1; display: flex; }
.stage { width: 740px; flex: none; border-right: 1px solid #ddd; display: flex; flex-direction: column; align-items: center; padding-top: 209px; }
.big { width: 152px; height: 152px; border-radius: 50%; background: #f1d2e0; color: #621a40; font-size: 60.500px; font-weight: 600; line-height: 150px; text-align: center; }
.stage p { margin: 24px 0 0; font-size: 22.750px; line-height: 36px; font-weight: 400; -webkit-text-stroke: .5px #242424; white-space: nowrap; }
.people { flex: 1; }
.p-head { height: 59px; border-bottom: 1px solid #ddd; display: flex; align-items: center; justify-content: space-between; padding: 1px 30px 0 20px; }
.p-head h2 { margin: 0; font-size: 15px; font-weight: 700; letter-spacing: -.2px; }
.p-head svg { width: 14px; height: 14px; color: #444; }
.p-body { padding: 16px 20px 0 20px; }
.p-search { height: 32px; width: 277px; background: #fff; border-radius: 4px; display: flex; align-items: center; justify-content: space-between; padding: 0 12px 0 13px; color: #666; font-size: 13px; }
.p-search svg { width: 16px; height: 16px; }
.p-share { height: 32px; margin-top: 10px; background: #fff; border: 1px solid #ccc; border-radius: 4px; display: flex; align-items: center; justify-content: center; gap: 7px; font-weight: 600; font-size: 13px; letter-spacing: .02px; width: 276px; padding-left: 2px; }
.p-share svg { width: 16px; height: 16px; }
.p-sec { height: 20px; margin: 12px 0 0 -14px; display: flex; align-items: center; gap: 5px; font-size: 11.300px; color: #333; padding-left: 1px; }
.p-sec i { border: 4.500px solid transparent; border-top: 6px solid #555; border-bottom: 0; margin-top: 2px; }
.p-row { height: 32px; display: flex; align-items: center; gap: 9px; }
.pic { width: 31px; height: 31px; border-radius: 50%; display: grid; place-items: center; font-size: 12px; font-weight: 700; position: relative; flex: none; margin: -2px 0 0 1px; }
.pink { background: #f1d2e0; color: #7d3a5d; }
.green { background: #e3eedb; color: #4f7350; }
.hel { background: #fff; color: #e3177c; font: 700 8px Lato, sans-serif; letter-spacing: -.4px; }
.nm { font-size: 13.450px; line-height: 17px; white-space: nowrap; color: #333; margin-left: -1px; }
.nm small { display: block; font-size: 11.300px; line-height: 16px; color: #666; }
.r2 .nm, .r3 .nm { font-size: 13.100px; }
.mute { width: 16px; height: 16px; margin: -2px 2px 0 auto; }
.r1 { margin-top: 20px; }
.r1 + .p-sec { margin-top: 13px; }
.r2 { margin-top: 20px; height: 33px; }
.r3 { margin-top: 15px; height: 32px; }
.st { position: absolute; right: -1px; bottom: 0; width: 10px; height: 10px; }
```
